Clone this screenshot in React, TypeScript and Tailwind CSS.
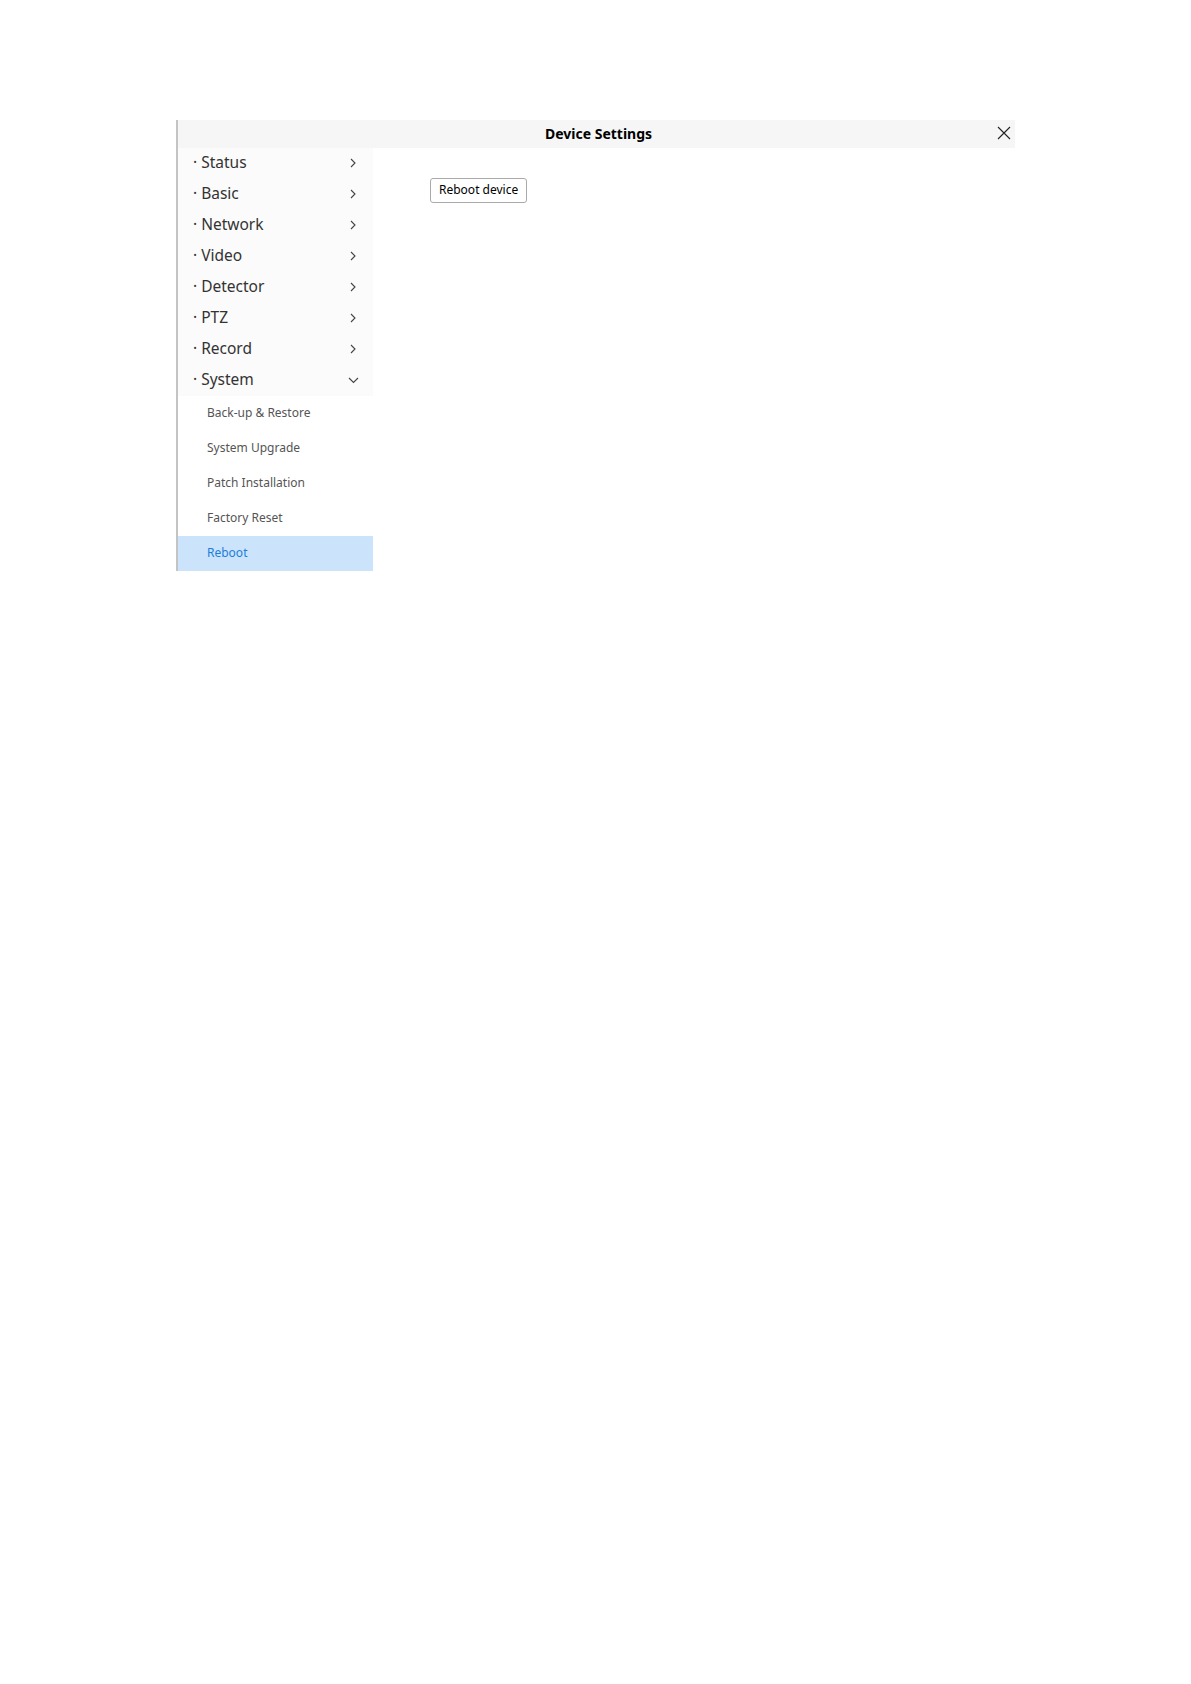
import React from "react";

const mainItems = ["Status", "Basic", "Network", "Video", "Detector", "PTZ", "Record"];
const subItems = ["Back-up & Restore", "System Upgrade", "Patch Installation", "Factory Reset", "Reboot"];

function ChevronRight() {
  return (
    <svg width="10" height="10" viewBox="0 0 10 10" fill="none" stroke="#444" strokeWidth="1.1">
      <path d="M3 1 L7 5 L3 9" />
    </svg>
  );
}

function ChevronDown() {
  return (
    <svg width="11" height="10" viewBox="0 0 11 10" fill="none" stroke="#444" strokeWidth="1.1">
      <path d="M1 3 L5.5 7.5 L10 3" />
    </svg>
  );
}

export default function App() {
  return (
    <div className="min-h-[1684px] w-full bg-white" style={{ fontFamily: '"Noto Sans", "Open Sans", sans-serif' }}>
      <div className="pt-[120px] pl-[176px]">
        <div className="w-[839px] border-l-2 border-[#c4c4c4]">
          <div className="relative flex h-[28px] items-center justify-center bg-[#f6f6f6] pb-[1px]">
            <span className="ml-[4px] text-[14px] font-bold text-black">Device Settings</span>
            <svg className="absolute right-[4px] top-[6px]" width="14" height="14" viewBox="0 0 14 14" fill="none" stroke="#222" strokeWidth="1.1">
              <path d="M1 1 L13 13 M13 1 L1 13" />
            </svg>
          </div>
          <div className="flex">
            <div className="w-[195px]">
              <div className="bg-[#fbfbfb]">
                {mainItems.map((t) => (
                  <div key={t} className="flex h-[31px] items-center justify-between pb-[1px] pl-[15px] pr-[15px] text-[15.5px] text-[#333]">
                    <span><span className="mr-[4px]">·</span>{t}</span>
                    <ChevronRight />
                  </div>
                ))}
                <div className="flex h-[31px] items-center justify-between pb-[1px] pl-[15px] pr-[14px] text-[15.5px] text-[#333]">
                  <span><span className="mr-[4px]">·</span>System</span>
                  <ChevronDown />
                </div>
              </div>
              <div>
                {subItems.map((t) => (
                  <div
                    key={t}
                    className={
                      t === "Reboot"
                        ? "flex h-[35px] items-center bg-[#cce4fb] pb-[1px] pl-[29px] text-[12px] text-[#1b7fd8]"
                        : "flex h-[35px] items-center pb-[1px] pl-[29px] text-[12px] text-[#555]"
                    }
                  >
                    {t}
                  </div>
                ))}
              </div>
            </div>
            <div className="flex-1 pl-[57px] pt-[28px]">
              <button className="h-[25px] rounded-[3px] border border-[#aaa] bg-white px-[8px] text-[12px] text-black">
                Reboot device
              </button>
            </div>
          </div>
        </div>
      </div>
    </div>
  );
}
